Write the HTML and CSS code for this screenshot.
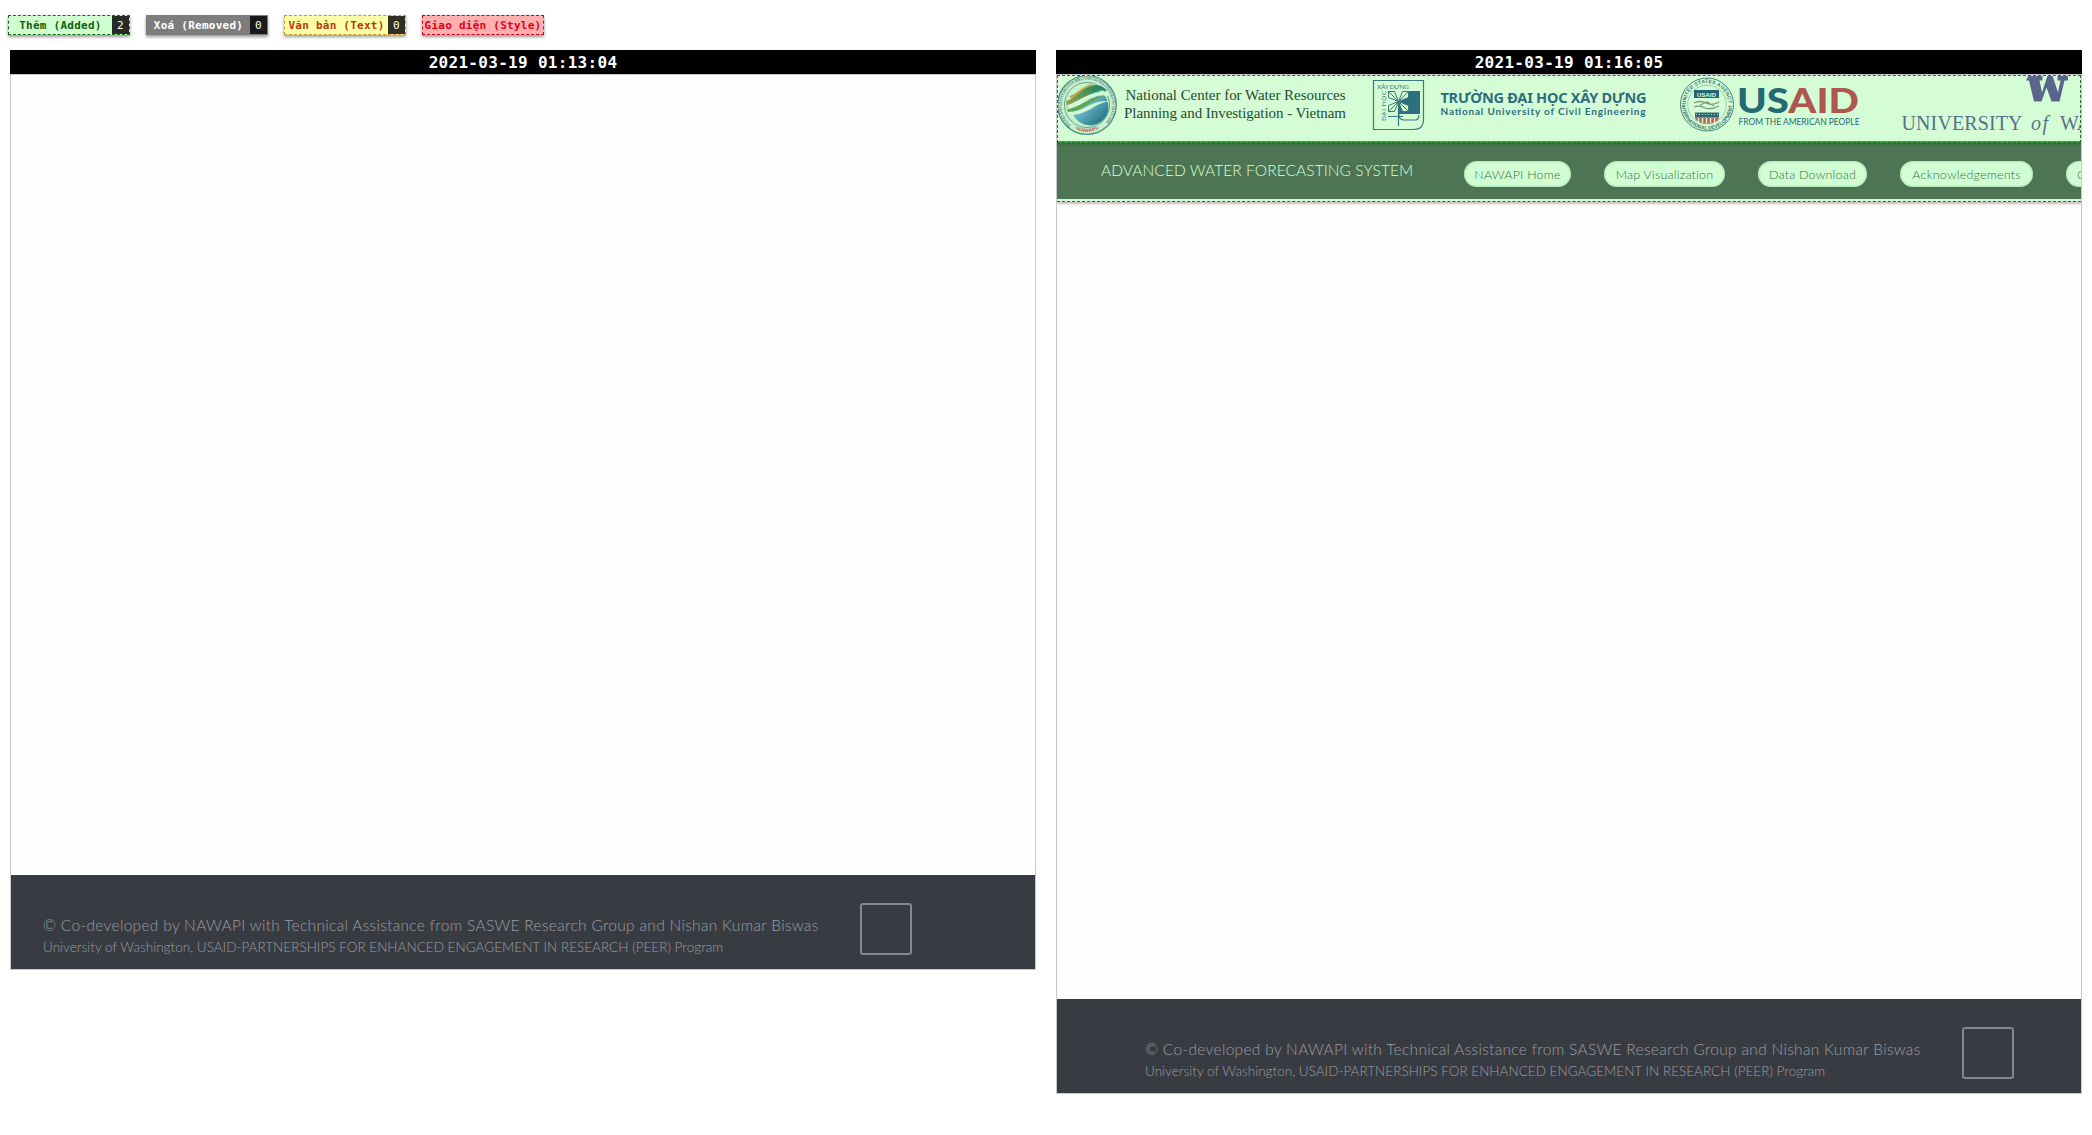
FILE: index.html
```html
<!DOCTYPE html>
<html lang="vi">
<head>
<meta charset="utf-8">
<title>2021-03-19</title>
<link rel="stylesheet" href="styles.css">
</head>
<body>
<div class="legend">
  <div class="tag tag-added"><span class="tag-label">Thêm (Added)</span><span class="count">2</span></div>
  <div class="tag tag-removed"><span class="tag-label">Xoá (Removed)</span><span class="count">0</span></div>
  <div class="tag tag-text"><span class="tag-label">Văn bản (Text)</span><span class="count">0</span></div>
  <div class="tag tag-style"><span class="tag-label">Giao diện (Style)</span></div>
</div>
<main class="compare">
  <section class="pane">
    <h2 class="stamp">2021-03-19 01:13:04</h2>
    <div class="page page-before">
      <footer class="footer">
        <div class="credits">
          <p class="credit-main">© Co-developed by NAWAPI with Technical Assistance from SASWE Research Group and Nishan Kumar Biswas</p>
          <p class="credit-sub">University of Washington, USAID-PARTNERSHIPS FOR ENHANCED ENGAGEMENT IN RESEARCH (PEER) Program</p>
        </div>
        <div class="to-top"></div>
      </footer>
    </div>
  </section>
  <section class="pane">
    <h2 class="stamp">2021-03-19 01:16:05</h2>
    <div class="page page-after">
      <header class="logos">
        <svg class="logo-strip" width="1024" height="67" viewBox="1057 75 1024 67">
          <defs>
            <path id="ring-nawapi" d="M1071.500 125.500a25.500 25.500 0 1 1 31 0"/>
            <path id="ring-nawapi-low" d="M1075 129q12 6 24 0"/>
            <path id="ring-us" d="M1685.500 104.500a21.500 21.500 0 0 1 43 0"/>
            <path id="ring-us-low" d="M1681.800 104.500a25.200 25.200 0 0 0 50.400 0"/>
            <path id="petal" d="M0 0-10-4V-10H-4ZL-10-10"/>
            <linearGradient id="globe" x1="0" x2="1" y1="0" y2="1"><stop offset="0" stop-color="#2f9d92"/><stop offset=".45" stop-color="#62b4c8"/><stop offset="1" stop-color="#16616b"/></linearGradient>
            <linearGradient id="leaf" x1="0" x2="1" y1="1" y2="0"><stop offset="0" stop-color="#a5a54b"/><stop offset="1" stop-color="#128064"/></linearGradient>
          </defs>
          <g>
            <circle cx="1087" cy="105" r="29.300" fill="#c8efd0" stroke="#4d8f80" stroke-width="1.300"/>
            <circle cx="1087" cy="105" r="22.500" fill="#c6f3cb" stroke="#4d8f80" stroke-width=".8"/>
            <text class="ring nawapi-ring"><textPath href="#ring-nawapi" textLength="122">TRUNG TÂM QUY HOẠCH VÀ ĐIỀU TRA TÀI NGUYÊN NƯỚC QUỐC GIA</textPath></text>
            <text class="ring nawapi-name"><textPath href="#ring-nawapi-low" textLength="25">•NAWAPI•</textPath></text>
            <circle cx="1090" cy="107" r="18.500" fill="url(#globe)"/>
            <path d="M1066 101c9-2 14-14 29-16 6 0 10 3 12 6-17-4-25 14-40 17z" fill="url(#leaf)"/>
            <path d="M1067 105c12-3 20-14 40-13l3 4c-19-4-26 11-42 13z" fill="#d3f8d1"/>
            <path d="M1067 109c15-1 20-13 40-13-15 2-22 15-39 16z" fill="#65a653"/>
            <path d="M1068 112c17 0 22-12 41-11-16 3-21 14-39 14z" fill="#d3f8d1"/>
            <path d="M1070 97c8-2 12-10 22-12" stroke="#c0a443" stroke-width="2" fill="none"/>
          </g>
          <g class="serif">
            <text x="1125.500" y="100" textLength="220">National Center for Water Resources</text>
            <text x="1124" y="118" textLength="222">Planning and Investigation - Vietnam</text>
          </g>
          <g fill="none" stroke="#3b7880" stroke-width="1.200">
            <path d="M1373.500 80.500h50v39.500q0 9.500-10 9.500h-40z"/>
            <path fill="#2c6f80" stroke="none" d="M1404 91h16v23h-21v-10z"/>
            <path d="M1399 114.500q0 5.500 5 5.500h11q4 0 4-5"/>
            <g fill="#d4fdd6" stroke-width="1" transform="translate(1398.500 101.500)">
              <use href="#petal"/><use href="#petal" transform="rotate(90)"/><use href="#petal" transform="rotate(180)"/><use href="#petal" transform="rotate(270)"/>
            </g>
            <path d="M1398.500 101v25M1388 116.500h15"/>
            <g class="emblem"><text x="1377" y="89" textLength="32">XÂY DỰNG</text><text transform="translate(1386 121) rotate(-90)" textLength="30">ĐẠI HỌC</text></g>
          </g>
          <g class="nuce">
            <text class="nuce-main" x="1440.500" y="102.500" textLength="206" lengthAdjust="spacing">TRƯỜNG ĐẠI HỌC XÂY DỰNG</text>
            <text class="nuce-sub" x="1440.500" y="115" textLength="205">National University of Civil Engineering</text>
          </g>
          <g>
            <circle cx="1707" cy="104.500" r="26.500" fill="none" stroke="#4b8379"/>
            <circle cx="1707" cy="104.500" r="19.300" fill="none" stroke="#7aaa93" stroke-width=".6"/>
            <text class="ring us-ring"><textPath href="#ring-us" textLength="66">UNITED STATES AGENCY</textPath></text>
            <text class="ring us-ring"><textPath href="#ring-us-low" textLength="78">INTERNATIONAL DEVELOPMENT</textPath></text>
            <path fill="#236374" d="M1694 90h25v8h-25z"/>
            <text class="seal-name" x="1697" y="96.500" textLength="19">USAID</text>
            <path d="M1694 103q6-3 12 0t13-1M1694 107q6-2 11 1 6 2 14-2M1700 105l7-3 7 4" fill="none" stroke="#789878" stroke-width="1.300"/>
            <path fill="#2e6877" d="M1695 112.500h24v5h-24z"/>
            <path d="M1696 114.500h22" stroke="#b5dfc0" stroke-width="1" stroke-dasharray="1 2"/>
            <path fill="#b0605b" d="M1695 117.500h24q-1 6-12 6t-12-6"/>
            <path d="M1698.500 118v5M1702.500 118v5M1706.500 118v5M1710.500 118v5M1714.500 118v5" stroke="#dbf6d3" stroke-width="1.500"/>
            <text class="usaid" x="1737" y="113" textLength="122" lengthAdjust="spacingAndGlyphs"><tspan fill="#236a72">US</tspan><tspan fill="#af5650">AID</tspan></text>
            <text class="people" x="1738.500" y="125" textLength="121" lengthAdjust="spacingAndGlyphs">FROM THE AMERICAN PEOPLE</text>
          </g>
          <g>
            <path fill="#59668b" d="M2028.500 75.500h14v5h-3l2.500 12 5.500-17h5l5.500 17 2.500-12h-3v-5h10.500v5h-3.500l-5 21h-8l-5-14-5 14h-7.500l-5-21h-3z"/>
            <text class="uw" x="1901.500" y="130" textLength="121">UNIVERSITY</text>
            <text class="uw uw-of" x="2031" y="130" textLength="17">of</text>
            <text class="uw" x="2060" y="130" textLength="31" lengthAdjust="spacingAndGlyphs">WA</text>
          </g>
        </svg>
      </header>
      <nav class="nav">
        <span class="brand">ADVANCED WATER FORECASTING SYSTEM</span>
        <a class="pill w-home">NAWAPI Home</a>
        <a class="pill w-map">Map Visualization</a>
        <a class="pill w-data">Data Download</a>
        <a class="pill w-ack">Acknowledgements</a>
        <a class="pill w-contact">Contact</a>
      </nav>
      <footer class="footer">
        <div class="credits">
          <p class="credit-main">© Co-developed by NAWAPI with Technical Assistance from SASWE Research Group and Nishan Kumar Biswas</p>
          <p class="credit-sub">University of Washington, USAID-PARTNERSHIPS FOR ENHANCED ENGAGEMENT IN RESEARCH (PEER) Program</p>
        </div>
        <div class="to-top"></div>
      </footer>
    </div>
  </section>
</main>
</body>
</html>
```
FILE: styles.css
```css
* { box-sizing: border-box; }
body { margin: 0; padding: 15px 8px 0; height: 1135px; overflow: hidden; background: #fff; font-family: Lato, sans-serif; }

.legend { display: flex; gap: 16px; height: 20px; font: bold 11px "DejaVu Sans Mono", monospace; letter-spacing: .25px; }
.tag { display: flex; flex: none; width: 122px; height: 20px; border: 1px dashed; box-shadow: 0 2px 3px rgba(0,0,0,.4); line-height: 19px; white-space: nowrap; }
.tag-label { flex: 1; text-align: center; }
.tag-added { background: #d0ffd0; border-color: #176b17; color: #106010; }
.tag-removed { background: #7d7d7d; border-color: #7d7d7d; color: #fff; }
.tag-text { background: #ffffa8; border-color: #c9963c; color: #b53a08; }
.tag-style { background: #ffafaf; border-color: #d20018; color: #e00016; }
.count { width: 17px; background: #252b25; color: #fff; text-align: center; font-weight: normal; }
.tag-removed .count { background: #191919; }
.tag-text .count { background: #302f20; }

.compare { display: grid; grid-template-columns: 1026px 1026px; gap: 20px; align-items: start; padding: 15px 0 0 2px; }
.stamp { margin: 0; height: 24px; background: #000; color: #fff; font: bold 16px/25px "DejaVu Sans Mono", monospace; letter-spacing: .3px; text-align: center; }
.page { display: flex; flex-direction: column; border: 1px solid #c8c8cc; overflow: hidden; background: #fefefe; }
.page-before { height: 896px; }
.page-after { height: 1020px; }

.footer { display: flex; flex: none; height: 94px; margin-top: auto; padding-left: 32px; background: #393b43; color: #9b9da0; }
.credits { width: 817px; padding-top: 40px; white-space: nowrap; font-weight: 300; }
.credits p { margin: 0; }
.credit-main { font-size: 15.500px; line-height: 21px; letter-spacing: .31px; }
.credit-sub { font-size: 13.500px; line-height: 22px; letter-spacing: .02px; }
.to-top { width: 52px; height: 52px; margin-top: 28px; border: 2px solid #85868b; border-radius: 3px; }
.page-after .footer { padding-left: 88px; }

.logos { flex: none; height: 68px; border: 1px dashed #24702a; background: linear-gradient(#d4fdd6 66px, #35a83a 66px) border-box; overflow: hidden; }
.logo-strip { display: block; margin: -1px; }
.serif { font: 15px "Liberation Serif", serif; fill: #264b32; }
.ring { font-family: "Liberation Sans", sans-serif; fill: #3b796d; }
.nawapi-ring { font-size: 4.500px; }
.nawapi-name { font-size: 5px; font-weight: bold; fill: #c15a42; }
.us-ring { font-size: 5px; font-weight: bold; }
.emblem { font: 6.500px Lato, sans-serif; fill: #3b7880; stroke: none; }
.nuce { font-family: "Noto Sans", sans-serif; font-weight: bold; fill: #2e6c80; }
.nuce-main { font-size: 14.500px; }
.nuce-sub { font-size: 10px; font-family: Lato, sans-serif; }
.seal-name { font: bold 6px "Liberation Sans", sans-serif; fill: #e4ffe4; }
.usaid { font: 900 35px Lato, sans-serif; }
.people { font: 9px Lato, sans-serif; fill: #286a72; }
.uw { font: 20px "Liberation Serif", serif; fill: #59708b; }
.uw-of { font-style: italic; }

.nav { display: flex; flex: none; height: 59px; padding: 17px 0 0 44px; background: linear-gradient(#316d36, #4e7553 3px, #4e7553 56px, #d0ffd0 56px) border-box; border-bottom: 1px dashed #24702a; box-shadow: 0 2px 2px #c9bcbc; white-space: nowrap; font-weight: 300; }
.brand { flex: none; width: 363px; color: #d8ffd9; font-size: 15.500px; line-height: 21px; letter-spacing: .08px; }
.pill { flex: none; height: 26px; margin: 1px 33px 0 0; border-radius: 13px; background: #d0ffd4; box-shadow: inset 0 0 3px #8fc795; color: #3f6b46; font-size: 12.500px; line-height: 27px; letter-spacing: .2px; text-align: center; }
.w-home { width: 107px; }
.w-map { width: 121px; }
.w-data { width: 109px; }
.w-ack { width: 133px; }
.w-contact { width: 66px; }
```
